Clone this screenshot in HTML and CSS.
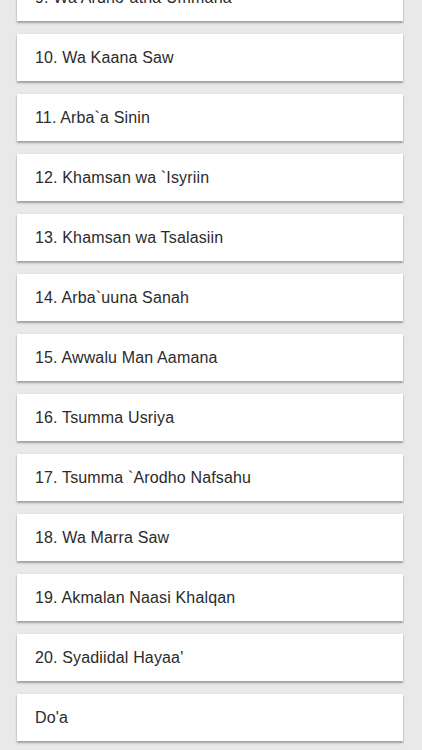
FILE: index.html
```html
<!DOCTYPE html>
<html>
<head>
<meta charset="utf-8">
<link rel="stylesheet" href="styles.css">
</head>
<body>
<ul class="list">
  <li class="card">9. Wa Ardho-atha Ummana</li>
  <li class="card">10. Wa Kaana Saw</li>
  <li class="card">11. Arba`a Sinin</li>
  <li class="card">12. Khamsan wa `Isyriin</li>
  <li class="card">13. Khamsan wa Tsalasiin</li>
  <li class="card">14. Arba`uuna Sanah</li>
  <li class="card">15. Awwalu Man Aamana</li>
  <li class="card">16. Tsumma Usriya</li>
  <li class="card">17. Tsumma `Arodho Nafsahu</li>
  <li class="card">18. Wa Marra Saw</li>
  <li class="card">19. Akmalan Naasi Khalqan</li>
  <li class="card">20. Syadiidal Hayaa'</li>
  <li class="card">Do'a</li>
</ul>
</body>
</html>
```
FILE: styles.css
```css
html, body {
  margin: 0;
  padding: 0;
  background: #e9e9e9;
}
body {
  overflow: hidden;
  height: 750px;
}
.list {
  list-style: none;
  margin: -26px 0 0 0;
  padding: 0 19px 10px 17px;
  display: flex;
  flex-direction: column;
  gap: 13px;
}
.card {
  height: 47px;
  box-sizing: border-box;
  background: #ffffff;
  display: flex;
  align-items: center;
  padding-left: 18px;
  font-family: "Liberation Sans", Arial, sans-serif;
  font-size: 16px;
  letter-spacing: 0.15px;
  color: #2b2b2b;
  box-shadow: 0 2px 2px rgba(0, 0, 0, 0.32), 0 0 1px rgba(0, 0, 0, 0.12);
}
```
